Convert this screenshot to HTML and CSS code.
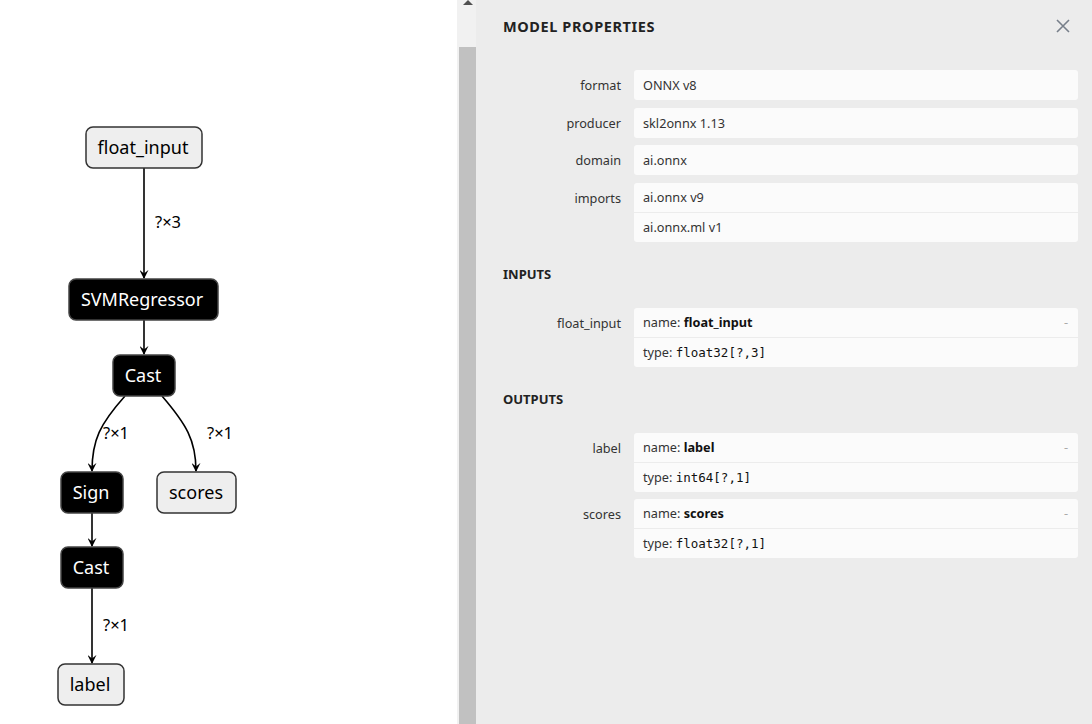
FILE: index.html
```html
<!DOCTYPE html>
<html lang="en">
<head>
    <meta charset="UTF-8">
    <title>Model Properties</title>
    <link rel="stylesheet" href="styles.css">
</head>
<body>

<div class="graph">
    <svg class="graph-canvas" width="457" height="724" viewBox="0 0 457 724">
        <defs>
            <marker id="arrow" viewBox="0 0 10 10" refX="9" refY="5" markerWidth="9" markerHeight="9" markerUnits="userSpaceOnUse" orient="auto">
                <path d="M 0 0 L 10 5 L 0 10 L 4 5 z" fill="#000"></path>
            </marker>
        </defs>

        <!-- edges -->
        <path class="edge" d="M144,168 L144,278" marker-end="url(#arrow)"></path>
        <path class="edge" d="M144,320 L144,354" marker-end="url(#arrow)"></path>
        <path class="edge" d="M125,396 C100,424 92,440 92,471" marker-end="url(#arrow)"></path>
        <path class="edge" d="M162,396 C186,424 196,440 196,471" marker-end="url(#arrow)"></path>
        <path class="edge" d="M92,513 L92,546" marker-end="url(#arrow)"></path>
        <path class="edge" d="M92,588 L92,663" marker-end="url(#arrow)"></path>

        <text class="edge-label" x="155" y="228">?×3</text>
        <text class="edge-label" x="103" y="439">?×1</text>
        <text class="edge-label" x="207" y="439">?×1</text>
        <text class="edge-label" x="103" y="631">?×1</text>

        <!-- nodes -->
        <rect class="node-io" x="86" y="127" width="116" height="41" rx="7"></rect>
        <text class="node-text dark" x="143" y="154">float_input</text>

        <rect class="node-op" x="69" y="279" width="149" height="41" rx="7"></rect>
        <text class="node-text" x="142" y="306">SVMRegressor</text>

        <rect class="node-op" x="113" y="355" width="62" height="41" rx="7"></rect>
        <text class="node-text" x="143" y="382">Cast</text>

        <rect class="node-op" x="61" y="472" width="62" height="41" rx="7"></rect>
        <text class="node-text" x="91" y="499">Sign</text>

        <rect class="node-io" x="157" y="472" width="79" height="41" rx="7"></rect>
        <text class="node-text dark" x="196" y="499">scores</text>

        <rect class="node-op" x="61" y="547" width="62" height="41" rx="7"></rect>
        <text class="node-text" x="91" y="574">Cast</text>

        <rect class="node-io" x="58" y="664" width="66" height="41" rx="7"></rect>
        <text class="node-text dark" x="90" y="691">label</text>
    </svg>
</div>

<div class="scrollbar">
    <div class="scroll-top"><span class="scroll-arrow"></span></div>
    <div class="scroll-thumb"></div>
</div>

<div class="sidebar">
    <div class="sidebar-header">
        <span class="sidebar-title">MODEL PROPERTIES</span>
        <svg class="close" width="14" height="14" viewBox="0 0 14 14">
            <path d="M1 1 L13 13 M13 1 L1 13" stroke="#777f8a" stroke-width="1.6" fill="none"></path>
        </svg>
    </div>

    <div class="props">
        <div class="prop">
            <div class="prop-name">format</div>
            <div class="prop-box"><div class="prop-row">ONNX v8</div></div>
        </div>
        <div class="prop">
            <div class="prop-name">producer</div>
            <div class="prop-box"><div class="prop-row">skl2onnx 1.13</div></div>
        </div>
        <div class="prop">
            <div class="prop-name">domain</div>
            <div class="prop-box"><div class="prop-row">ai.onnx</div></div>
        </div>
        <div class="prop">
            <div class="prop-name">imports</div>
            <div class="prop-box">
                <div class="prop-row half">ai.onnx v9</div>
                <div class="prop-row half">ai.onnx.ml v1</div>
            </div>
        </div>
    </div>

    <div class="section-title">INPUTS</div>
    <div class="props">
        <div class="prop">
            <div class="prop-name">float_input</div>
            <div class="prop-box">
                <div class="prop-row half">name: <b>float_input</b><span class="toggle">-</span></div>
                <div class="prop-row half">type: <code>float32[?,3]</code></div>
            </div>
        </div>
    </div>

    <div class="section-title">OUTPUTS</div>
    <div class="props">
        <div class="prop">
            <div class="prop-name">label</div>
            <div class="prop-box">
                <div class="prop-row half">name: <b>label</b><span class="toggle">-</span></div>
                <div class="prop-row half">type: <code>int64[?,1]</code></div>
            </div>
        </div>
        <div class="prop">
            <div class="prop-name">scores</div>
            <div class="prop-box">
                <div class="prop-row half">name: <b>scores</b><span class="toggle">-</span></div>
                <div class="prop-row half">type: <code>float32[?,1]</code></div>
            </div>
        </div>
    </div>
</div>

</body>
</html>
```

FILE: styles.css
```css
body {
    margin: 0;
    display: flex;
    height: 724px;
    overflow: hidden;
    font-family: "Noto Sans", "Open Sans", sans-serif;
    background-color: #fff;
}
.graph {
    width: 457px;
    flex-shrink: 0;
    background-color: #fff;
}
.graph-canvas {
    display: block;
}
.edge {
    stroke: #000;
    stroke-width: 1.6;
    fill: none;
}
.edge-label {
    font-family: "Noto Sans", sans-serif;
    font-size: 16.5px;
    fill: #000;
}
.node-io {
    fill: #eee;
    stroke: #333;
    stroke-width: 1.5;
}
.node-op {
    fill: #000;
    stroke: #444;
    stroke-width: 1.5;
}
.node-text {
    font-family: "Noto Sans", sans-serif;
    font-size: 18px;
    fill: #fff;
    text-anchor: middle;
}
.node-text.dark {
    fill: #000;
}
.scrollbar {
    width: 19px;
    flex-shrink: 0;
    display: flex;
    flex-direction: column;
    background-color: #f1f1f1;
}
.scroll-top {
    height: 47px;
    display: flex;
    justify-content: center;
}
.scroll-arrow {
    width: 0;
    height: 0;
    margin-top: 0;
    margin-left: 2px;
    border-left: 5px solid transparent;
    border-right: 5px solid transparent;
    border-bottom: 5px solid #505050;
}
.scroll-thumb {
    flex: 1;
    margin-left: 2px;
    background-color: #c1c1c1;
}
.sidebar {
    flex: 1;
    background-color: #ececec;
    padding: 0 14px 0 27px;
    color: #333;
    font-size: 12.7px;
}
.sidebar-header {
    height: 51px;
    display: flex;
    align-items: center;
    justify-content: space-between;
    padding-right: 8px;
}
.sidebar-title {
    font-weight: bold;
    font-size: 14.5px;
    color: #222;
    letter-spacing: 0.6px;
}
.close {
    display: block;
}
.props {
    display: flex;
    flex-direction: column;
    gap: 7.5px;
    margin-top: 19px;
}
.prop {
    display: flex;
}
.prop-name {
    width: 118px;
    margin-right: 13px;
    text-align: right;
    line-height: 30px;
    flex-shrink: 0;
}
.prop-box {
    flex: 1;
    background-color: #fbfbfb;
    border-radius: 3px;
}
.prop-row {
    height: 30px;
    line-height: 30px;
    padding: 0 9px;
    position: relative;
}
.prop-row.half {
    height: 29px;
    line-height: 29px;
}
.prop-row.half + .prop-row.half {
    border-top: 1px solid #ececec;
}
.prop-row b {
    color: #111;
}
.toggle {
    position: absolute;
    right: 10px;
    top: 0;
    color: #aaa;
}
code {
    font-family: "DejaVu Sans Mono", monospace;
    font-size: 12.5px;
    color: #111;
}
.section-title {
    margin-top: 20px;
    line-height: 24px;
    font-weight: bold;
    font-size: 13px;
    color: #222;
}
.section-title + .props {
    margin-top: 22px;
}
```
